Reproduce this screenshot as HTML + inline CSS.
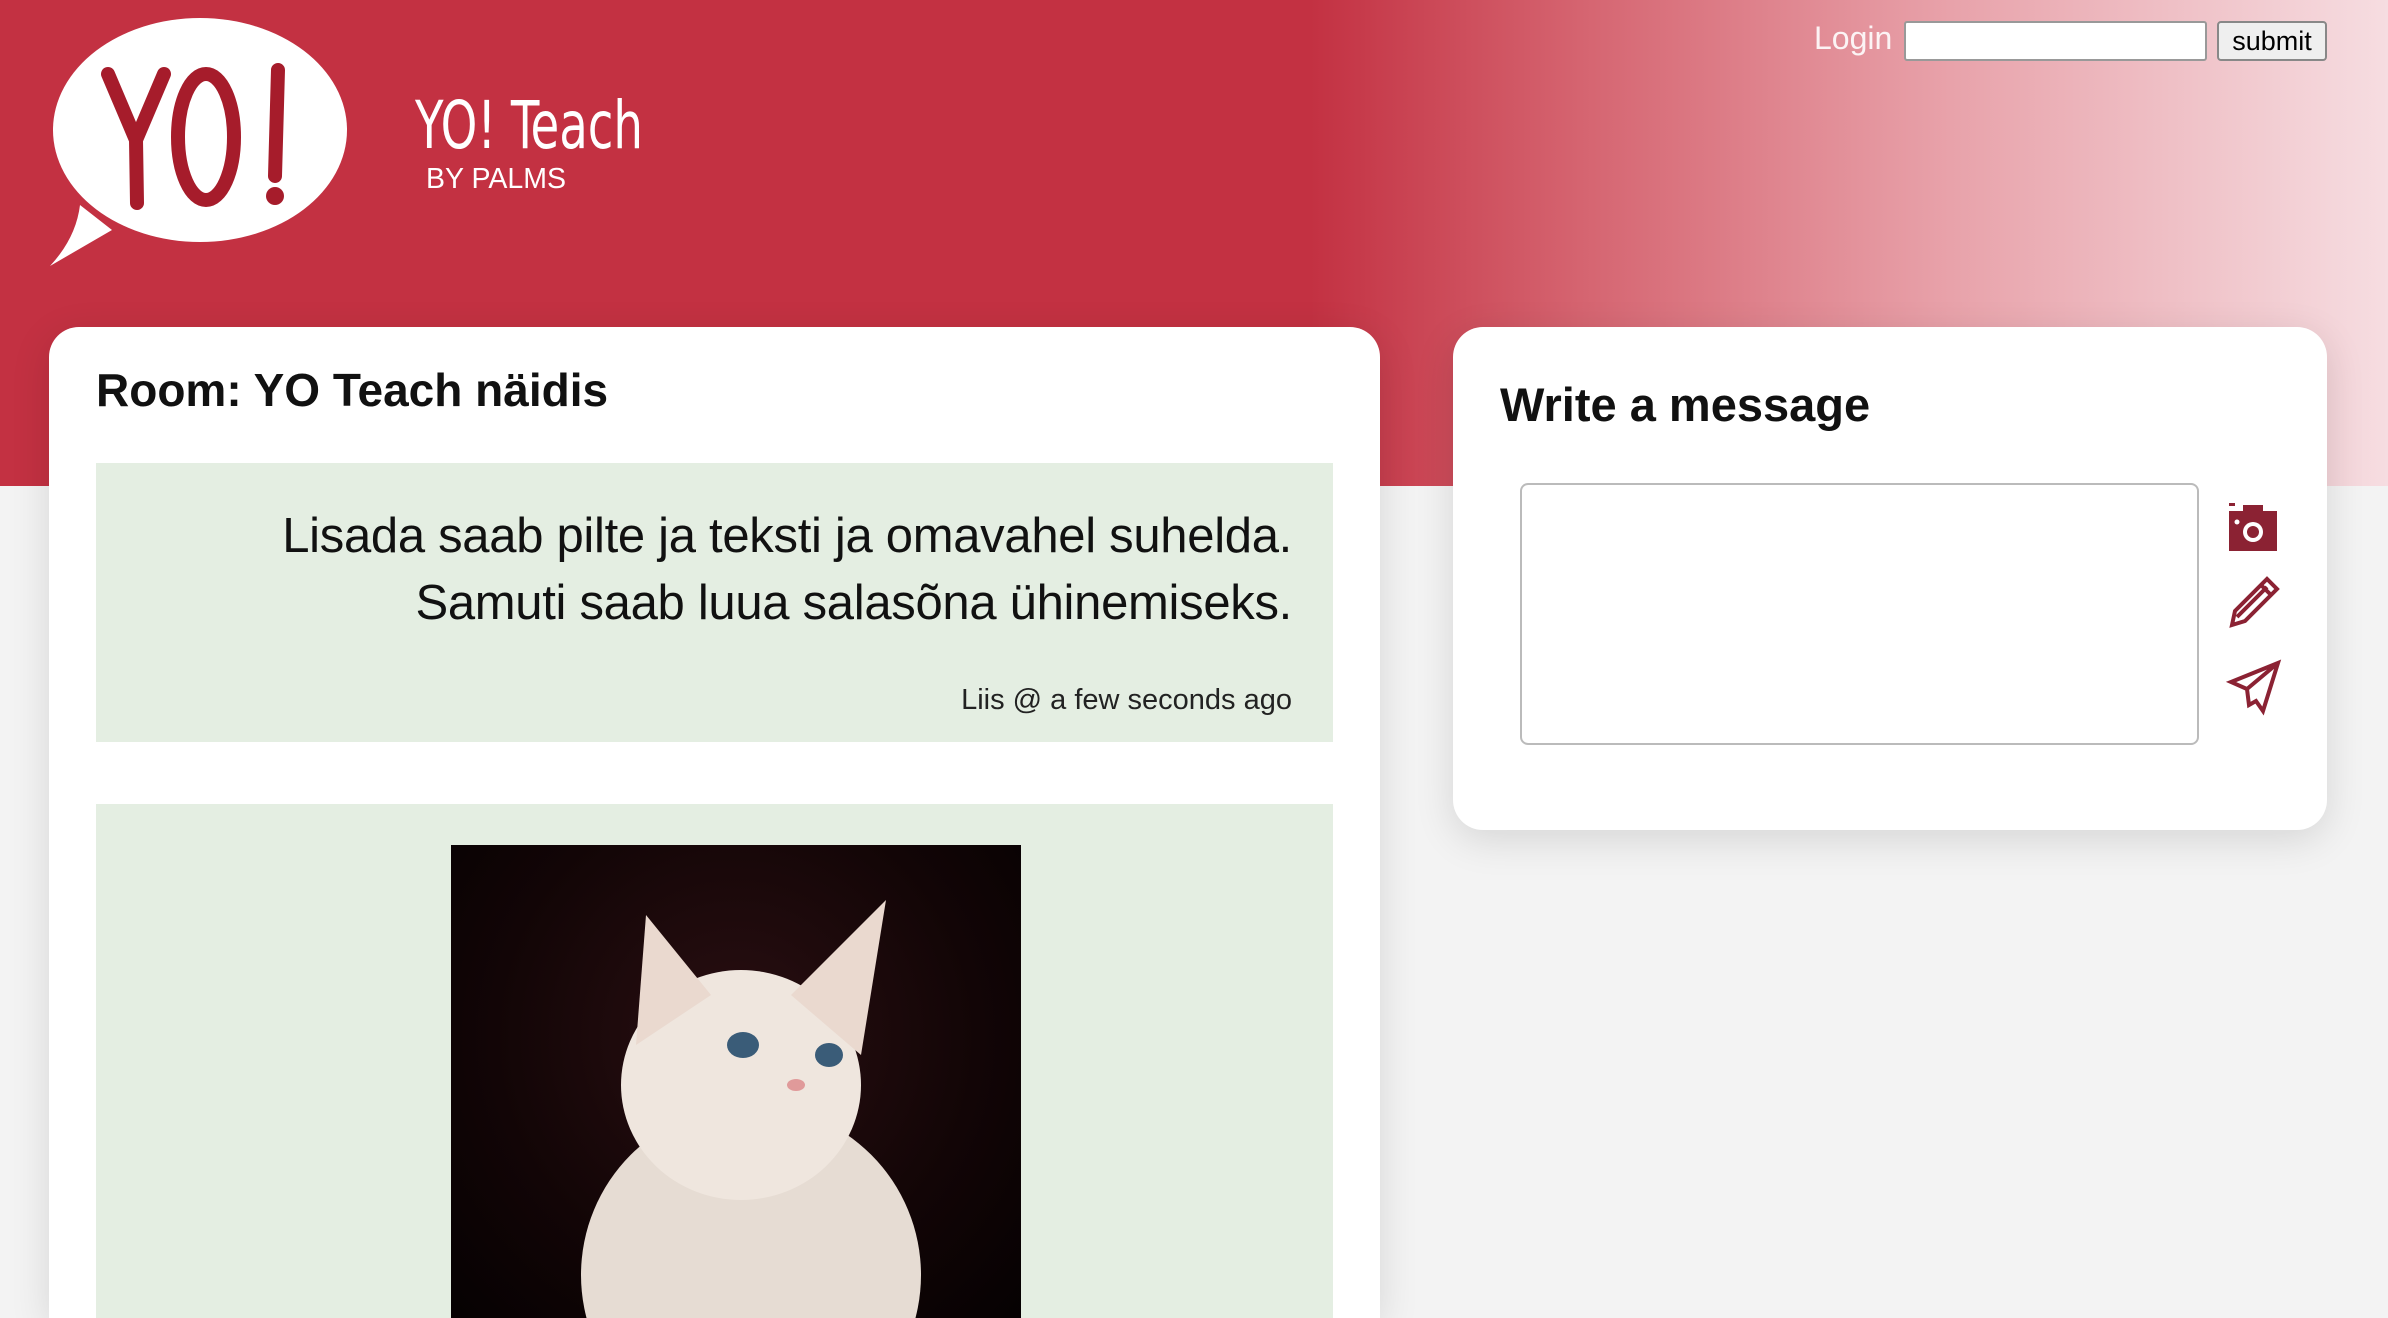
<!DOCTYPE html>
<html><head><meta charset="utf-8"><style>
*{margin:0;padding:0;box-sizing:border-box}
html,body{width:2388px;height:1318px;overflow:hidden}
body{background:#f3f3f3;font-family:"Liberation Sans","DejaVu Sans",sans-serif;position:relative}
.hdr{position:absolute;left:0;top:0;width:2388px;height:486px;background:linear-gradient(90deg,#c33142 0,#c33142 1310px,#d56470 1580px,#e8a2aa 1950px,#f6dde1 2388px)}
.card{position:absolute;background:#fff;border-radius:30px;box-shadow:0 10px 40px rgba(0,0,0,.12);overflow:hidden}
.card.l{border-bottom-left-radius:0;border-bottom-right-radius:0}
.green{position:absolute;background:#e4eee2;left:47px;width:1237px}
</style></head><body>
<div class="hdr"></div>
<svg style="position:absolute;left:0;top:0" width="700" height="300">
<ellipse cx="200" cy="130" rx="147" ry="112" fill="#fff"/>
<path d="M80 205 Q76 238 50 266 L112 230 Z" fill="#fff"/>
<g fill="none" stroke="#a61c2b" stroke-width="14" stroke-linecap="round">
<path d="M108 74 L136 140 L164 74 M136 140 L137 203"/>
<ellipse cx="206" cy="137" rx="28" ry="63"/>
<path d="M278 70 L275 176"/>
</g>
<circle cx="275" cy="196" r="9" fill="#a61c2b"/>
<text x="415" y="148" fill="#fff" font-family="DejaVu Sans Condensed, Liberation Sans Narrow, sans-serif" font-size="66" font-weight="300" textLength="228" lengthAdjust="spacingAndGlyphs">YO! Teach</text>
<text x="426" y="188" fill="#fff" font-size="29" textLength="140" lengthAdjust="spacingAndGlyphs">BY PALMS</text>
</svg>
<div style="position:absolute;left:1814px;top:20px;color:#fff;font-size:32px;opacity:.9">Login</div>
<div style="position:absolute;left:1904px;top:21px;width:303px;height:40px;background:#fff;border:2px solid #999;border-radius:3px"></div>
<div style="position:absolute;left:2217px;top:21px;width:110px;height:40px;background:#efefef;border:2px solid #888;border-radius:4px;font-size:27px;text-align:center;line-height:36px;color:#000">submit</div>

<div class="card l" style="left:49px;top:327px;width:1331px;height:991px">
<div style="position:absolute;left:47px;top:36px;font-size:46px;font-weight:bold;color:#111">Room: YO Teach näidis</div>
<div class="green" style="top:136px;height:279px">
<div style="position:absolute;right:41px;top:40px;text-align:right;font-size:49px;line-height:67px;color:#111;letter-spacing:-0.3px">Lisada saab pilte ja teksti ja omavahel suhelda.<br>Samuti saab luua salasõna ühinemiseks.</div>
<div style="position:absolute;right:41px;top:221px;font-size:29px;color:#222">Liis @ a few seconds ago</div>
</div>
<div class="green" style="top:477px;height:520px">
<div style="position:absolute;left:355px;top:41px;width:570px;height:480px;background:radial-gradient(ellipse at 50% 40%,#2a0f12 0,#120506 60%,#050102 100%);overflow:hidden">
<svg width="570" height="480">
<ellipse cx="300" cy="430" rx="170" ry="170" fill="#e6dcd3"/>
<ellipse cx="290" cy="240" rx="120" ry="115" fill="#efe6de"/>
<path d="M185 200 L195 70 L260 150 Z" fill="#ead9cf"/>
<path d="M340 150 L435 55 L410 210 Z" fill="#ead9cf"/>
<ellipse cx="292" cy="200" rx="16" ry="13" fill="#3a5c78"/>
<ellipse cx="378" cy="210" rx="14" ry="12" fill="#3a5c78"/>
<ellipse cx="345" cy="240" rx="9" ry="6" fill="#e09a9a"/>
</svg></div>
</div>
</div>

<div class="card" style="left:1453px;top:327px;width:874px;height:503px">
<div style="position:absolute;left:47px;top:50px;font-size:47px;font-weight:bold;color:#111">Write a message</div>
<div style="position:absolute;left:67px;top:156px;width:679px;height:262px;border:2px solid #bbb;border-radius:8px"></div>
<svg style="position:absolute;left:770px;top:170px" width="60" height="240">
<g fill="#8b2233">
<rect x="6" y="14" width="48" height="40"/><rect x="20" y="8" width="20" height="8"/><rect x="6" y="6" width="6" height="3"/>
<circle cx="30" cy="35" r="10" fill="#fff"/><circle cx="30" cy="35" r="6"/><circle cx="14" cy="25" r="2.5" fill="#fff"/>
</g>
<g fill="none" stroke="#8b2233" stroke-width="4">
<path d="M9 128 L12 114 L44 82 L54 92 L22 124 Z M38 88 L48 98 M14 120 L44 90"/>
<path d="M8 185 L55 166 L40 214 L33 204 L26 208 L24 192 Z M24 192 L55 166"/>
</g>
</svg>
</div>
</body></html>
